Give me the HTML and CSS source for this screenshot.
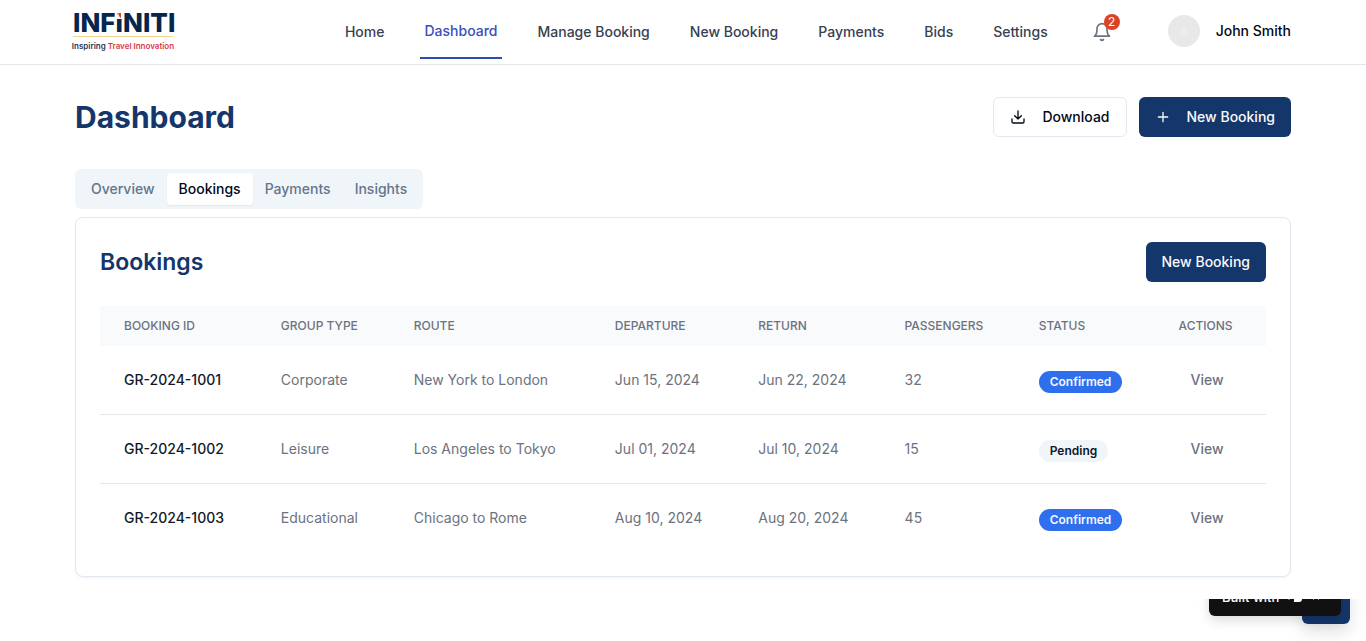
FILE: index.html
```html
<!DOCTYPE html>
<html lang="en">
<head>
<meta charset="utf-8">
<meta name="viewport" content="width=device-width, initial-scale=1">
<title>Dashboard</title>
<link rel="stylesheet" href="styles.css">
</head>
<body>
<header class="site-header">
  <div class="container header-row">
    <a class="logo" href="#">
      <span class="logo-name">INFINITI
        <svg class="logo-spark" viewBox="0 0 6 6" aria-hidden="true"><path fill="#fff" d="M0 0h6v6H0z"/><path fill="#f2a33a" d="M0 0h5v5z"/><path fill="#d9453d" d="M3 0h2v5L3 3z"/></svg>
      </span>
      <span class="logo-tagline">Inspiring <span class="logo-accent">Travel Innovation</span></span>
    </a>
    <nav class="main-nav">
      <a class="nav-link" href="#">Home</a>
      <a class="nav-link active" href="#">Dashboard</a>
      <a class="nav-link" href="#">Manage Booking</a>
      <a class="nav-link" href="#">New Booking</a>
      <a class="nav-link" href="#">Payments</a>
      <a class="nav-link" href="#">Bids</a>
      <a class="nav-link" href="#">Settings</a>
    </nav>
    <div class="account">
      <button class="bell" type="button" aria-label="Notifications">
        <svg class="bell-icon" viewBox="0 0 24 24" aria-hidden="true"><path d="M6 8a6 6 0 0 1 12 0c0 7 3 9 3 9H3s3-2 3-9"/><path d="M10.3 21a1.94 1.94 0 0 0 3.4 0"/></svg>
        <span class="bell-count">2</span>
      </button>
      <button class="profile" type="button"><span class="avatar"></span>John Smith</button>
    </div>
  </div>
</header>

<main class="container main">
  <div class="title-row">
    <h1>Dashboard</h1>
    <div class="actions">
      <button class="btn btn-outline" type="button">
        <svg class="icon" viewBox="0 0 24 24" aria-hidden="true"><path d="M21 15v4a2 2 0 0 1-2 2H5a2 2 0 0 1-2-2v-4M7 10l5 5 5-5M12 15V3"/></svg>
        Download
      </button>
      <button class="btn btn-primary" type="button">
        <svg class="icon" viewBox="0 0 24 24" aria-hidden="true"><path d="M5 12h14M12 5v14"/></svg>
        New Booking
      </button>
    </div>
  </div>

  <div class="tabs" role="tablist">
    <button class="tab" type="button" role="tab">Overview</button>
    <button class="tab selected" type="button" role="tab" aria-selected="true">Bookings</button>
    <button class="tab" type="button" role="tab">Payments</button>
    <button class="tab" type="button" role="tab">Insights</button>
  </div>

  <section class="card">
    <div class="card-head">
      <h2>Bookings</h2>
      <button class="btn btn-primary" type="button">New Booking</button>
    </div>
    <table class="bookings">
      <colgroup>
        <col class="col-id"><col class="col-type"><col class="col-route"><col class="col-departure"><col class="col-return"><col class="col-passengers"><col class="col-status"><col>
      </colgroup>
      <thead>
        <tr><th>Booking ID</th><th>Group Type</th><th>Route</th><th>Departure</th><th>Return</th><th>Passengers</th><th>Status</th><th>Actions</th></tr>
      </thead>
      <tbody>
        <tr><td class="booking-id">GR-2024-1001</td><td>Corporate</td><td>New York to London</td><td>Jun 15, 2024</td><td>Jun 22, 2024</td><td>32</td><td class="status"><span class="badge confirmed">Confirmed</span></td><td><button class="view" type="button">View</button></td></tr>
        <tr><td class="booking-id">GR-2024-1002</td><td>Leisure</td><td>Los Angeles to Tokyo</td><td>Jul 01, 2024</td><td>Jul 10, 2024</td><td>15</td><td class="status"><span class="badge pending">Pending</span></td><td><button class="view" type="button">View</button></td></tr>
        <tr><td class="booking-id">GR-2024-1003</td><td>Educational</td><td>Chicago to Rome</td><td>Aug 10, 2024</td><td>Aug 20, 2024</td><td>45</td><td class="status"><span class="badge confirmed">Confirmed</span></td><td><button class="view" type="button">View</button></td></tr>
      </tbody>
    </table>
  </section>
</main>

<div class="corner">
  <button class="chat" type="button" aria-label="Open chat"></button>
  <a class="built-with" href="#">Built with
    <svg class="maker-icon" viewBox="0 0 16 14" aria-hidden="true"><path fill="#fff" d="M0 0h6v9H4V7L2 10 0 7zM8 1h7v8c0 2-1 3-3 3H7V9l-1-1z"/><path stroke="#111" d="M9 7l3-3"/></svg>
    <svg class="close-icon" viewBox="0 0 10 10" aria-hidden="true"><path stroke="#999" d="M2 2l6 6M8 2L2 8"/></svg>
  </a>
</div>
</body>
</html>
```
FILE: styles.css
```css
* { box-sizing: border-box; }
body {
  margin: 0;
  min-height: 100vh;
  position: relative;
  background: #fff;
  color: #020817;
  font: 14px/20px Inter, sans-serif;
}
button { font: inherit; color: inherit; background: none; border: 0; padding: 0; cursor: pointer; }
a { color: inherit; text-decoration: none; }
h1, h2 { margin: 0; color: #14366a; }
h1 { font-size: 30px; line-height: 36px; font-weight: 700; }
h2 { font-size: 23px; line-height: 32px; font-weight: 600; }

.container { max-width: 1280px; margin: 0 auto; padding: 0 32px; }

.site-header { border-bottom: 1px solid #e5e7eb; }
.header-row { display: flex; align-items: center; justify-content: space-between; height: 64px; }
.logo { display: flex; flex-direction: column; align-items: center; width: 100px; margin-left: -2px; white-space: nowrap; }
.logo-name {
  position: relative;
  width: 100px;
  color: #07264d;
  font-size: 26px;
  line-height: 26px;
  font-weight: 800;
  border-bottom: 1px solid #f3d391;
}
.logo-spark { position: absolute; left: 43px; top: 3px; width: 6px; height: 6px; }
.logo-tagline { color: #26365a; font: 600 8px/18px Inter, sans-serif; }
.logo-accent { color: #d83a50; }

.main-nav { display: flex; gap: 32px; margin-left: 128px; font-weight: 500; color: #374151; }
.nav-link { display: flex; align-items: center; height: 54px; padding: 0 4px; white-space: nowrap; }
.nav-link.active { color: #3a50b8; border-bottom: 2px solid #2b50ac; }

.account { display: flex; align-items: center; gap: 56px; }
.bell { position: relative; width: 20px; height: 20px; color: #6b7280; }
.bell-icon { display: block; width: 20px; height: 20px; fill: none; stroke: currentColor; stroke-width: 2; stroke-linecap: round; stroke-linejoin: round; }
.bell-count {
  position: absolute;
  top: -8px;
  right: -8px;
  width: 16px;
  height: 16px;
  border-radius: 50%;
  background: #dc4226;
  color: #fff;
  font-size: 12px;
  line-height: 16px;
}
.profile { display: flex; align-items: center; gap: 16px; padding-bottom: 2px; font-weight: 500; white-space: nowrap; }
.avatar { width: 32px; height: 32px; border-radius: 50%; background: radial-gradient(circle, #eeeeee 2px, #e8e8e8 4px); }

.main { padding-top: 32px; padding-bottom: 64px; }
.title-row, .card-head { display: flex; align-items: center; justify-content: space-between; }
.title-row { margin-bottom: 32px; }
.actions { display: flex; gap: 12px; }
.btn { display: flex; align-items: center; gap: 16px; height: 40px; padding: 0 16px; border-radius: 6px; font-weight: 500; white-space: nowrap; }
.btn-outline { border: 1px solid #e2e8f0; }
.btn-primary { background: #14366a; color: #f8fafc; }
.icon { width: 16px; height: 16px; fill: none; stroke: currentColor; stroke-width: 2; stroke-linecap: round; stroke-linejoin: round; }

.tabs { display: flex; width: fit-content; padding: 4px; margin-bottom: 8px; border-radius: 6px; background: #f0f5f9; color: #64748b; }
.tab { padding: 6px 12px; border-radius: 4px; font-weight: 500; }
.tab.selected { background: #fff; color: #020817; box-shadow: 0 1px 2px rgb(0 0 0 / 6%); }

.card { padding: 24px; border: 1px solid #e2e8f0; border-radius: 8px; box-shadow: 0 1px 2px rgb(0 0 0 / 5%); }
.card-head { margin-bottom: 24px; }

.bookings { width: 100%; table-layout: fixed; border-spacing: 0; text-align: left; white-space: nowrap; }
.col-id { width: 13.45%; }
.col-type { width: 11.4%; }
.col-route { width: 17.25%; }
.col-departure { width: 12.3%; }
.col-return { width: 12.55%; }
.col-passengers { width: 11.5%; }
.col-status { width: 12%; }
th { padding: 12px 24px; background: #f9fafc; color: #6b7280; font-size: 12px; line-height: 16px; font-weight: 500; text-transform: uppercase; }
td { height: 69px; padding: 0 24px; border-bottom: 1px solid #e5e7eb; color: #6b7280; vertical-align: middle; }
tr:last-child td { height: 68px; border-bottom: 0; }
td.booking-id { color: #111827; font-weight: 500; }
td.status { padding-top: 4px; }
.badge { display: block; width: fit-content; padding: 3px 11px; border-radius: 11px; font-size: 12px; line-height: 16px; font-weight: 600; }
.confirmed { background: #2f6fed; color: #f3f6ff; }
.pending { background: #f0f5f9; color: #0f172a; }
.view { padding: 8px 12px; font-weight: 500; }

/* Floating widgets, cut off at the top of the corner strip */
.corner { position: absolute; right: 0; bottom: 0; width: 240px; height: 42px; overflow: hidden; }
.chat { position: absolute; right: 16px; bottom: 17px; width: 48px; height: 48px; border-radius: 6px; background: #14366a; box-shadow: 0 8px 16px rgb(0 0 0 / 12%); }
.built-with {
  position: absolute;
  right: 25px;
  bottom: 25px;
  display: flex;
  align-items: center;
  gap: 8px;
  width: 132px;
  height: 38px;
  padding: 0 13px;
  border-radius: 6px;
  background: #111;
  color: #fff;
  font-size: 13px;
  font-weight: 500;
  white-space: nowrap;
  box-shadow: 0 4px 12px rgb(0 0 0 / 15%);
}
.maker-icon { width: 16px; height: 14px; }
.close-icon { width: 10px; height: 10px; }
```
